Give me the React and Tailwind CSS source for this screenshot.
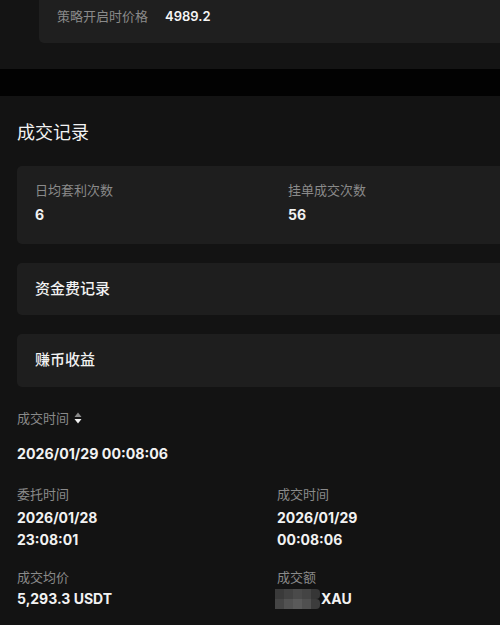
import React from "react";

function SortIcon() {
  return (
    <svg width="8" height="12" viewBox="0 0 8 12" className="ml-[5px]">
      <path d="M4 0.5 L7.5 5 L0.5 5 Z" fill="#8a8a8a" />
      <path d="M0.5 7 L7.5 7 L4 11.5 Z" fill="#f2f2f2" />
    </svg>
  );
}

function Pixelated() {
  const rows = [
    ["#3a3a3a", "#424242", "#4a4a4a", "#444444", "#363636"],
    ["#454545", "#525252", "#5a5a5a", "#505050", "#3c3c3c"],
  ];
  return (
    <div className="flex flex-col">
      {rows.map((r, i) => (
        <div key={i} className="flex">
          {r.map((c, j) => (
            <div key={j} className={j === 4 ? "w-[9px] h-[10px] rounded-r-[4px]" : "w-[9px] h-[10px]"} style={{ background: c }} />
          ))}
        </div>
      ))}
    </div>
  );
}

export default function App() {
  return (
    <div className="w-[500px] h-[625px] overflow-hidden bg-[#131313] font-['Inter','Noto_Sans_CJK_SC',sans-serif] antialiased">
      <div className="h-[69px] bg-[#141414]">
        <div className="ml-[39px] h-[43px] w-[520px] bg-[#1f1f1f] rounded-bl-[5px] pl-[18px] pt-[7px]">
          <div className="flex items-center h-[18px]">
            <span className="text-[13px] leading-[18px] text-[#8a8a8a]">策略开启时价格</span>
            <span className="ml-[17px] text-[13px] leading-[18px] font-semibold text-[#f5f5f5]">4989.2</span>
          </div>
        </div>
      </div>
      <div className="h-[27px] bg-[#020202]" />
      <div className="px-[17px] pt-[25px]">
        <div className="text-[18px] leading-[24px] text-[#f2f2f2]">成交记录</div>
        <div className="mt-[21px] w-[542px] h-[78px] bg-[#1e1e1e] rounded-[5px] px-[18px] pt-[15px] grid grid-cols-2">
          <div>
            <div className="text-[13px] leading-[18px] text-[#8a8a8a]">日均套利次数</div>
            <div className="mt-[6px] text-[14px] leading-[20px] font-bold text-[#f2f2f2]">6</div>
          </div>
          <div>
            <div className="text-[13px] leading-[18px] text-[#8a8a8a]">挂单成交次数</div>
            <div className="mt-[6px] text-[14px] leading-[20px] font-bold text-[#f2f2f2]">56</div>
          </div>
        </div>
        <div className="mt-[19px] w-[542px] h-[52px] bg-[#1e1e1e] rounded-[5px] px-[18px] flex items-center">
          <span className="text-[15px] font-medium text-[#f2f2f2]">资金费记录</span>
        </div>
        <div className="mt-[19px] w-[542px] h-[53px] bg-[#1e1e1e] rounded-[5px] px-[18px] flex items-center">
          <span className="text-[15px] font-medium text-[#f2f2f2]">赚币收益</span>
        </div>
        <div className="mt-[22px] flex items-center h-[18px]">
          <span className="text-[13px] leading-[18px] text-[#8a8a8a]">成交时间</span>
          <SortIcon />
        </div>
        <div className="mt-[17px] text-[14.2px] leading-[20px] font-bold text-[#f2f2f2]">2026/01/29 00:08:06</div>
        <div className="mt-[21px] grid grid-cols-[260px_1fr]">
          <div>
            <div className="text-[13px] leading-[18px] text-[#8a8a8a]">委托时间</div>
            <div className="mt-[4px] text-[14px] leading-[22px] font-bold text-[#f2f2f2]">2026/01/28<br />23:08:01</div>
          </div>
          <div>
            <div className="text-[13px] leading-[18px] text-[#8a8a8a]">成交时间</div>
            <div className="mt-[4px] text-[14px] leading-[22px] font-bold text-[#f2f2f2]">2026/01/29<br />00:08:06</div>
          </div>
          <div className="mt-[17px]">
            <div className="text-[13px] leading-[18px] text-[#8a8a8a]">成交均价</div>
            <div className="mt-[2px] text-[14px] leading-[22px] font-bold text-[#f2f2f2]">5,293.3 USDT</div>
          </div>
          <div className="mt-[17px]">
            <div className="text-[13px] leading-[18px] text-[#8a8a8a]">成交额</div>
            <div className="mt-[2px] flex items-center h-[22px] -ml-[2px]">
              <Pixelated />
              <span className="ml-[1px] text-[14px] leading-[22px] font-bold text-[#f2f2f2]">XAU</span>
            </div>
          </div>
        </div>
      </div>
    </div>
  );
}
